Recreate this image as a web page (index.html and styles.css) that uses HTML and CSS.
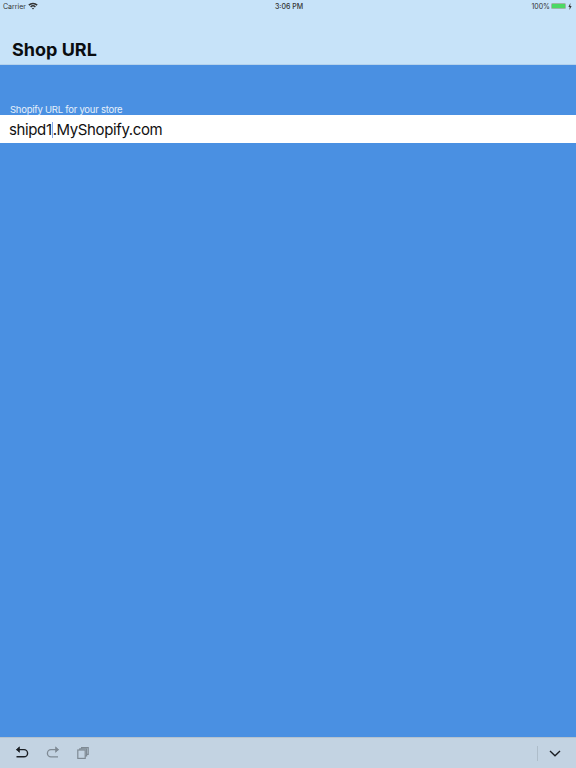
FILE: index.html
```html
<!DOCTYPE html>
<html lang="en">
<head>
  <meta charset="UTF-8" />
  <meta name="viewport" content="width=device-width, initial-scale=1.0" />
  <title>Shop URL</title>
  <link rel="stylesheet" href="styles.css">
</head>
<body>
  <div class="header">
    <div class="status-bar">
      <div class="status-left">
        <span>Carrier</span>
        <svg class="wifi" viewBox="0 0 10 8" width="10" height="8">
          <path d="M0.3 2.6 A6.6 6.6 0 0 1 9.7 2.6 L8.6 3.7 A5 5 0 0 0 1.4 3.7 Z" fill="#333" />
          <path d="M2.1 4.4 A4.1 4.1 0 0 1 7.9 4.4 L6.8 5.5 A2.5 2.5 0 0 0 3.2 5.5 Z" fill="#333" />
          <path d="M3.9 6.2 A1.6 1.6 0 0 1 6.1 6.2 L5 7.4 Z" fill="#333" />
        </svg>
      </div>
      <span class="status-time">3:06 PM</span>
      <div class="status-right">
        <span>100%</span>
        <div class="battery"><div class="battery-fill"></div></div>
        <svg viewBox="0 0 4 7" width="4" height="7">
          <path d="M2.4 0 L0.4 3.9 H1.7 L1.5 7 L3.6 3 H2.2 Z" fill="#333" />
        </svg>
      </div>
    </div>
    <h1>Shop URL</h1>
  </div>

  <div class="content">
    <label for="shop-url">Shopify URL for your store</label>
    <div class="url-field" id="shop-url">shipd1<span class="caret"></span>.MyShopify.com</div>
  </div>

  <div class="toolbar">
    <div class="toolbar-group">
      <svg viewBox="0 0 14 14" width="14" height="14" fill="none" stroke="#1b1f24" stroke-width="1.4">
        <path d="M1.5 3.6 H9 A3.6 3.6 0 0 1 9 10.8 H1.5" />
        <path d="M4.4 0.9 L1.5 3.6 L4.4 6.3 Z" fill="#1b1f24" stroke-width="0.8" />
      </svg>
      <svg viewBox="0 0 14 14" width="14" height="14" fill="none" stroke="#7f8a94" stroke-width="1.3">
        <path d="M12.5 3.6 H5 A3.6 3.6 0 0 0 5 10.8 H12" />
        <path d="M9.6 0.9 L12.5 3.6 L9.6 6.3 Z" fill="#7f8a94" stroke-width="0.8" />
      </svg>
      <svg viewBox="0 0 12 12" width="12" height="12" fill="none" stroke="#7f8a94" stroke-width="1.2">
        <rect x="0.8" y="3" width="7.4" height="8.4" />
        <path d="M2.8 3 V1.8 H9.6 V8.8 H8.2" />
        <path d="M4.6 1.8 V0.6 H11.2 V7.4 H9.6" />
      </svg>
    </div>
    <div class="toolbar-group-right">
      <div class="divider"></div>
      <svg viewBox="0 0 12 7" width="12" height="7" fill="none" stroke="#1b1f24" stroke-width="1.4">
        <path d="M1 1 L6 5.8 L11 1" />
      </svg>
    </div>
  </div>
</body>
</html>
```

FILE: styles.css
```css
body {
  margin: 0;
  width: 576px;
  height: 768px;
  display: flex;
  flex-direction: column;
  overflow: hidden;
  font-family: "Inter", "Liberation Sans", sans-serif;
  background: #4a90e2;
}

.header {
  height: 65px;
  box-sizing: border-box;
  background: #c7e3f9;
  border-bottom: 1px solid #b5d2ec;
  display: flex;
  flex-direction: column;
}

.status-bar {
  height: 12px;
  padding: 0 4px 0 3px;
  display: flex;
  justify-content: space-between;
  align-items: center;
  font-size: 7px;
  color: #333;
}

.status-left {
  width: 100px;
  display: flex;
  align-items: center;
  gap: 2px;
}

.status-time {
  font-weight: 500;
  margin-left: 3px;
}

.status-right {
  width: 100px;
  display: flex;
  justify-content: flex-end;
  align-items: center;
  gap: 1px;
}

.battery {
  width: 15px;
  height: 6px;
  margin-right: 1px;
  padding: 1px;
  border-radius: 1.5px;
  background: #9fb5a8;
  box-sizing: border-box;
  display: flex;
}

.battery-fill {
  flex: 1;
  background: #4cd964;
}

h1 {
  margin: 27px 0 0 12px;
  font-size: 18px;
  line-height: 22px;
  font-weight: 700;
  color: #0a0d10;
}

.content {
  flex: 1;
  padding-top: 39px;
  display: flex;
  flex-direction: column;
}

label {
  padding-left: 10px;
  font-size: 9.5px;
  line-height: 11px;
  letter-spacing: -0.25px;
  color: #e6f0fb;
}

.url-field {
  height: 28px;
  padding-left: 9px;
  background: #fff;
  font-size: 15px;
  line-height: 29px;
  letter-spacing: -0.38px;
  color: #111;
  white-space: nowrap;
}

.caret {
  display: inline-block;
  width: 1px;
  height: 16px;
  background: #8aa9e8;
  vertical-align: -3px;
}

.toolbar {
  height: 31px;
  box-sizing: border-box;
  padding: 0 15px 0 15px;
  border-top: 1px solid #b4c2cf;
  background: #c3d3e2;
  display: flex;
  justify-content: space-between;
  align-items: center;
}

.toolbar-group {
  display: flex;
  align-items: center;
  gap: 17px;
}

.toolbar-group-right {
  display: flex;
  align-items: center;
  gap: 11px;
}

.divider {
  width: 1px;
  height: 15px;
  background: #aebdca;
}
```
